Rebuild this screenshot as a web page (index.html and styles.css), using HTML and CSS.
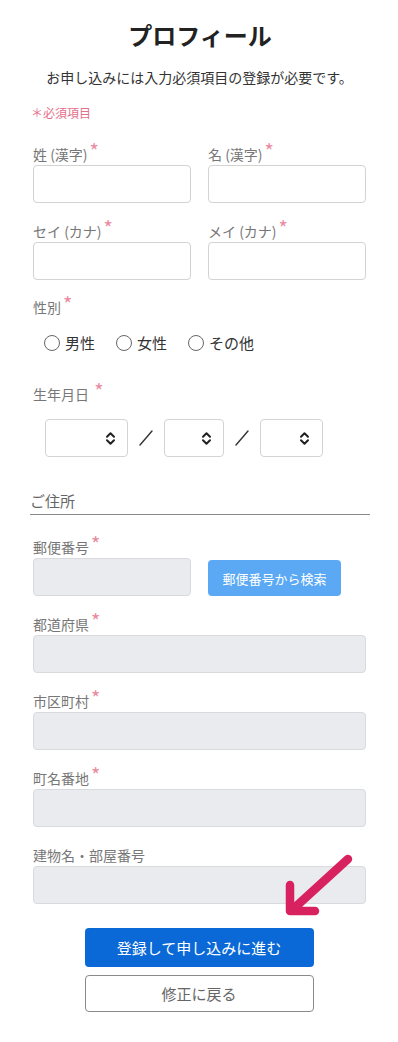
FILE: index.html
```html
<!DOCTYPE html>
<html lang="ja">
<head>
<meta charset="utf-8">
<title>プロフィール</title>
<link rel="stylesheet" href="styles.css">
</head>
<body>
<main class="page">
  <h1 class="title">プロフィール</h1>
  <p class="lead">お申し込みには入力必須項目の登録が必要です。</p>
  <p class="req-note">＊必須項目</p>

  <div class="grid2">
    <div class="field">
      <label class="label">姓 (漢字)<span class="ast">*</span></label>
      <div class="input"></div>
    </div>
    <div class="field">
      <label class="label">名 (漢字)<span class="ast">*</span></label>
      <div class="input"></div>
    </div>
    <div class="field">
      <label class="label">セイ (カナ)<span class="ast">*</span></label>
      <div class="input"></div>
    </div>
    <div class="field">
      <label class="label">メイ (カナ)<span class="ast">*</span></label>
      <div class="input"></div>
    </div>
  </div>

  <div class="field sex">
    <label class="label">性別<span class="ast">*</span></label>
    <div class="radios">
      <span class="radio"><span class="circle"></span>男性</span>
      <span class="radio"><span class="circle"></span>女性</span>
      <span class="radio"><span class="circle"></span>その他</span>
    </div>
  </div>

  <div class="field birth">
    <label class="label">生年月日 <span class="ast">*</span></label>
    <div class="selects">
      <div class="select s-year"><svg class="chev" viewBox="0 0 11 15" width="11" height="15"><path d="M2 5.8 L5.5 2.3 L9 5.8 M2 9.2 L5.5 12.7 L9 9.2" fill="none" stroke="#222" stroke-width="2" stroke-linecap="round" stroke-linejoin="round"/></svg></div>
      <svg class="slash" viewBox="0 0 36 20" width="36" height="20"><line x1="12" y1="17" x2="24" y2="3" stroke="#333" stroke-width="1.4" stroke-linecap="round"/></svg>
      <div class="select s-month"><svg class="chev" viewBox="0 0 11 15" width="11" height="15"><path d="M2 5.8 L5.5 2.3 L9 5.8 M2 9.2 L5.5 12.7 L9 9.2" fill="none" stroke="#222" stroke-width="2" stroke-linecap="round" stroke-linejoin="round"/></svg></div>
      <svg class="slash" viewBox="0 0 36 20" width="36" height="20"><line x1="12" y1="17" x2="24" y2="3" stroke="#333" stroke-width="1.4" stroke-linecap="round"/></svg>
      <div class="select s-day"><svg class="chev" viewBox="0 0 11 15" width="11" height="15"><path d="M2 5.8 L5.5 2.3 L9 5.8 M2 9.2 L5.5 12.7 L9 9.2" fill="none" stroke="#222" stroke-width="2" stroke-linecap="round" stroke-linejoin="round"/></svg></div>
    </div>
  </div>

  <h2 class="section">ご住所</h2>

  <div class="field zip">
    <label class="label">郵便番号<span class="ast">*</span></label>
    <div class="zip-row">
      <div class="input gray"></div>
      <button class="zip-btn" type="button">郵便番号から検索</button>
    </div>
  </div>

  <div class="field">
    <label class="label">都道府県<span class="ast">*</span></label>
    <div class="input gray"></div>
  </div>
  <div class="field">
    <label class="label">市区町村<span class="ast">*</span></label>
    <div class="input gray"></div>
  </div>
  <div class="field">
    <label class="label">町名番地<span class="ast">*</span></label>
    <div class="input gray"></div>
  </div>
  <div class="field building">
    <label class="label">建物名・部屋番号</label>
    <div class="input gray"></div>
    <svg class="arrow" viewBox="0 0 80 80" width="80" height="80">
      <path d="M68 10 L11 62 M10 36 L10 62 L35 62" fill="none" stroke="#d8225f" stroke-width="8.5" stroke-linecap="round" stroke-linejoin="round"/>
    </svg>
  </div>

  <div class="actions">
    <button class="btn primary" type="button">登録して申し込みに進む</button>
    <button class="btn secondary" type="button">修正に戻る</button>
  </div>
</main>
</body>
</html>
```

FILE: styles.css
```css
* { box-sizing: border-box; }
html, body { margin: 0; padding: 0; background: #fff; }
body {
  font-family: "Noto Sans CJK JP", "Noto Sans", "Liberation Sans", sans-serif;
  color: #333;
}
.page {
  width: 398px;
  padding: 18px 32px 30px 33px;
}
.title {
  margin: 0;
  text-align: center;
  font-size: 24px;
  line-height: 34px;
  font-weight: 700;
  color: #222;
  padding-left: 1px;
}
.lead {
  margin: 15px 0 0 0;
  text-align: center;
  font-size: 14px;
  line-height: 20px;
  color: #333;
}
.req-note {
  margin: 17px 0 0 -2px;
  font-size: 12px;
  line-height: 18px;
  color: #e5708b;
}
.grid2 {
  display: grid;
  grid-template-columns: 158px 158px;
  column-gap: 17px;
  row-gap: 18px;
  margin-top: 22px;
}
.field { display: flex; flex-direction: column; }
.field + .field { margin-top: 18px; }
.grid2 .field + .field { margin-top: 0; }
.label {
  display: block;
  font-size: 14px;
  line-height: 20px;
  color: #777;
  margin-bottom: 1px;
}
.ast {
  color: #ea8aa2;
  font-size: 20px;
  position: relative;
  top: -1px;
  line-height: 0;
  margin-left: 2px;
}
.input {
  height: 38px;
  border: 1px solid #d3d3d3;
  border-radius: 4px;
  background: #fff;
}
.input.gray {
  background: #e9ebee;
  border-color: #d8dadd;
}
.page .field.sex { margin-top: 17px; }
.radios {
  display: flex;
  align-items: center;
  margin: 14px 0 0 11px;
  height: 22px;
  font-size: 15px;
  color: #333;
}
.radio {
  display: inline-flex;
  align-items: center;
  margin-right: 21px;
  line-height: 22px;
}
.circle {
  width: 16px;
  height: 16px;
  border: 1.5px solid #666;
  border-radius: 50%;
  margin-right: 5px;
}
.page .field.birth { margin-top: 30px; }
.selects {
  display: flex;
  align-items: center;
  margin: 14px 0 0 12px;
}
.select {
  height: 38px;
  border: 1px solid #d3d3d3;
  border-radius: 4px;
  background: #fff;
  display: flex;
  align-items: center;
  justify-content: flex-end;
  padding-right: 11px;
}
.s-year { width: 83px; }
.s-month { width: 60px; }
.s-day { width: 63px; padding-right: 12px; }
.chev { display: block; }
.slash { display: block; flex: none; }
.section {
  margin: 34px -4px 0 -3px;
  font-size: 15px;
  line-height: 20px;
  font-weight: 400;
  color: #666;
  padding-bottom: 3px;
  border-bottom: 1.5px solid #888;
}
.page .field.zip { margin-top: 22px; }
.zip-row {
  display: flex;
  align-items: center;
}
.zip-row .input { width: 158px; }
.zip-btn {
  margin-left: 17px;
  width: 133px;
  height: 36px;
  margin-top: 2px;
  border: none;
  border-radius: 4px;
  background: #5ba9f4;
  color: #fff;
  font-family: inherit;
  font-size: 13px;
  padding: 0;
}
.building { position: relative; }
.arrow {
  position: absolute;
  left: 247px;
  top: 4px;
}
.actions {
  display: flex;
  flex-direction: column;
  align-items: center;
  gap: 8px;
  margin-top: 24px;
  padding-right: 1px;
}
.btn {
  width: 229px;
  border-radius: 4px;
  font-family: inherit;
  font-size: 15px;
  padding: 0;
}
.primary {
  height: 39px;
  background: #0a69d7;
  border: none;
  color: #fff;
}
.secondary {
  height: 37px;
  background: #fff;
  border: 1px solid #8a8a8a;
  color: #666;
}
```
